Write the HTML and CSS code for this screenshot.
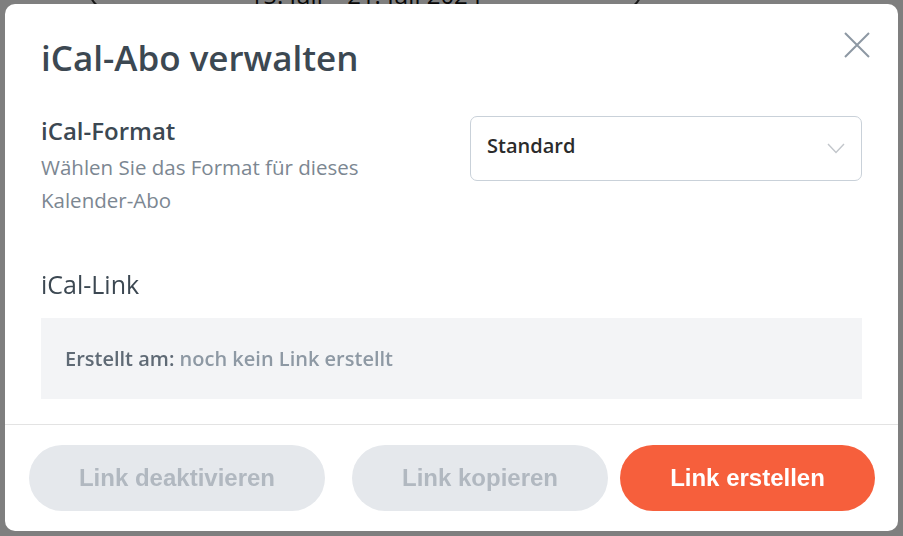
FILE: index.html
```html
<!DOCTYPE html>
<html lang="de">
<head>
<meta charset="utf-8">
<title>iCal-Abo verwalten</title>
<link rel="stylesheet" href="styles.css">
</head>
<body>
<div class="page">
  <div class="date-pill">15. Juli – 21. Juli 2024</div>
</div>
<div class="overlay"></div>
<div class="modal" role="dialog" aria-labelledby="modal-title">
  <div class="modal-body">
    <div class="header">
      <h1 class="title" id="modal-title">iCal-Abo verwalten</h1>
      <button class="close" aria-label="Schließen">
        <svg width="26" height="26" viewBox="0 0 26 26"><path d="M1 1 L25 25 M25 1 L1 25" stroke="#8d98a3" stroke-width="2" fill="none"/></svg>
      </button>
    </div>
    <div class="format-row">
      <div class="format-text">
        <div class="label label-strong">iCal-Format</div>
        <div class="desc">Wählen Sie das Format für dieses<br>Kalender-Abo</div>
      </div>
      <div class="select">
        <span class="select-value">Standard</span>
        <svg width="18" height="11" viewBox="0 0 18 11"><path d="M1 1 L9 9.5 L17 1" stroke="#c2c6cb" stroke-width="1.4" fill="none"/></svg>
      </div>
    </div>
    <div class="link-section">
      <div class="label label-medium">iCal-Link</div>
      <div class="link-box">
        <span class="link-key">Erstellt am:</span>&nbsp;<span class="link-val">noch kein Link erstellt</span>
      </div>
    </div>
  </div>
  <div class="footer">
    <button class="btn btn-disabled btn-deact">Link deaktivieren</button>
    <button class="btn btn-disabled btn-copy">Link kopieren</button>
    <button class="btn btn-primary btn-create">Link erstellen</button>
  </div>
</div>
</body>
</html>
```

FILE: styles.css
```css
* { box-sizing: border-box; }
html, body { margin: 0; padding: 0; }
body {
  width: 903px;
  height: 536px;
  overflow: hidden;
  background: #ffffff;
  font-family: "Open Sans", "Noto Sans", sans-serif;
}
.page {
  display: flex;
  padding-left: 88px;
}
.date-pill {
  margin-top: -36px;
  width: 555px;
  height: 48px;
  border: 2px solid #333;
  border-radius: 24px;
  display: flex;
  align-items: flex-end;
  justify-content: center;
  font-family: "Open Sans", sans-serif;
  font-size: 24px;
  line-height: 30px;
  color: #111;
}
.overlay {
  position: fixed;
  inset: 0;
  background: rgba(0, 0, 0, 0.5);
}
.modal {
  position: fixed;
  left: 5px;
  top: 4px;
  width: 893px;
  background: #ffffff;
  border-radius: 10px;
  display: flex;
  flex-direction: column;
}
.modal-body {
  padding: 34px 36px 25px 36px;
  display: flex;
  flex-direction: column;
}
.header {
  display: flex;
  justify-content: space-between;
  align-items: flex-start;
}
.title {
  margin: 0;
  font-size: 35px;
  line-height: 40px;
  font-weight: 600;
  color: #3c4852;
}
.close {
  margin: -6px -8px 0 0;
  padding: 0;
  border: 0;
  background: none;
  width: 26px;
  height: 26px;
  display: flex;
}
.format-row {
  margin-top: 38px;
  display: flex;
  justify-content: space-between;
  align-items: flex-start;
}
.label {
  font-size: 24px;
  line-height: 30px;
  color: #3c4852;
}
.label-strong { font-weight: 600; }
.label-medium { font-weight: 500; font-size: 25px; }
.desc {
  margin-top: 5px;
  font-size: 20.5px;
  line-height: 33px;
  color: #7c8792;
}
.select {
  width: 392px;
  height: 65px;
  border: 1px solid #c9d1d9;
  border-radius: 7px;
  display: flex;
  align-items: center;
  justify-content: space-between;
  padding: 0 16px 6px 16px;
}
.select-value {
  font-family: "Open Sans", sans-serif;
  font-weight: 600;
  font-size: 20px;
  color: #2b2b2b;
}
.select svg { margin-top: 6px; }
.link-section {
  margin-top: 52px;
  display: flex;
  flex-direction: column;
}
.link-box {
  margin-top: 19px;
  height: 81px;
  background: #f3f4f6;
  display: flex;
  align-items: center;
  padding: 0 24px;
  font-size: 20px;
  font-weight: 600;
}
.link-key { color: #5f6a75; }
.link-val { color: #8e99a4; }
.footer {
  border-top: 1px solid #e3e3e3;
  padding: 20px 23px 20px 24px;
  display: flex;
}
.btn {
  height: 66px;
  border: 0;
  border-radius: 33px;
  font-family: "Liberation Sans", Arial, sans-serif;
  font-weight: 700;
  font-size: 24px;
  padding: 0;
}
.btn-disabled {
  background: #e5e8ec;
  color: #b1b8c0;
}
.btn-primary {
  background: #f65f3c;
  color: #ffffff;
}
.btn-deact { width: 296px; margin-right: 27px; }
.btn-copy { width: 256px; margin-right: 12px; }
.btn-create { width: 255px; }
```
